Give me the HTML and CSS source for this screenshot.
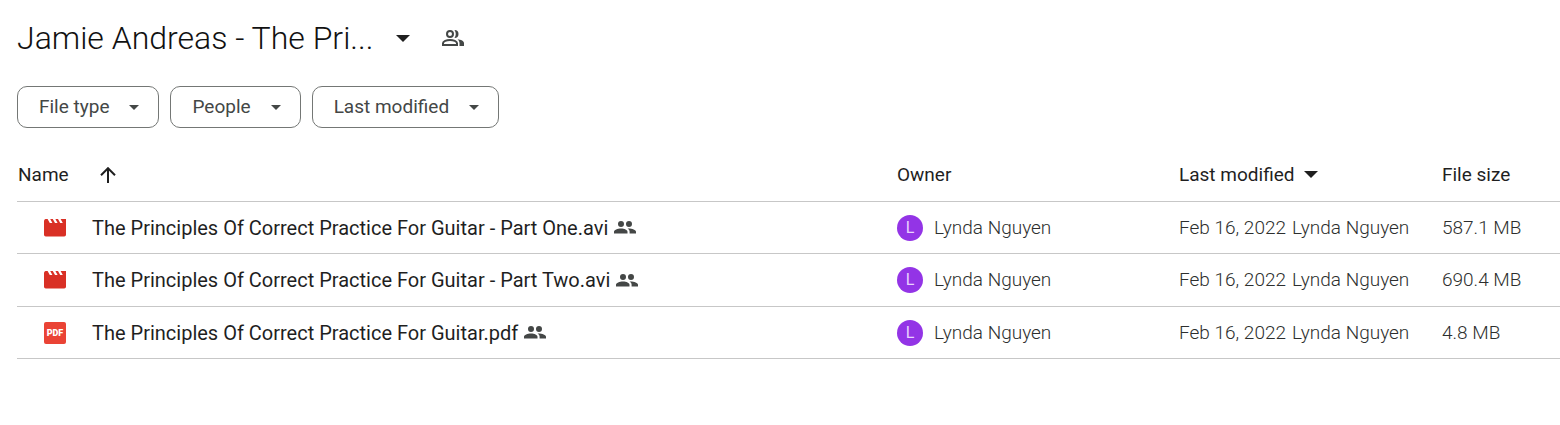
FILE: index.html
```
<!DOCTYPE html>
<html lang="en">
<head>
<meta charset="utf-8">
<title>Jamie Andreas - The Principles</title>
<link rel="stylesheet" href="styles.css">
</head>
<body>
<svg class="sprite" aria-hidden="true">
  <symbol id="caret" viewBox="0 0 14 7"><path d="M0 0h14L7 7z"/></symbol>
  <symbol id="shared" viewBox="0 0 22 13"><path d="M7 0a3 3 0 1 1 0 6A3 3 0 0 1 7 0zM15 0a3 3 0 1 1 0 6A3 3 0 0 1 15 0zM0 12.500v-1.800C0 8.800 3.500 7.400 7 7.400s6.500 1.400 6.500 3.300v1.800zM15.600 12.500v-1.800c0-1.400-.8-2.400-2-3.200 3.900-.3 8.400 1.300 8.400 3.200v1.800z"/></symbol>
  <symbol id="movie" viewBox="0 0 22 18"><path d="M0 2Q0 .4 1.500 0h2.100l2.200 4h2.600L6.200 0h2.600L11 4h2.600l-2.200-4H14l2.200 4h2.600l-2.200-4H22v15.800A1.800 1.800 0 0 1 20.200 17.600H1.800A1.800 1.800 0 0 1 0 15.800z"/></symbol>
</svg>
<header class="heading">
  <h1 class="title">Jamie Andreas - The Pri...</h1>
  <button class="icon-button" type="button" aria-label="Folder actions"><svg class="caret-large"><use href="#caret"/></svg></button>
  <button class="icon-button share" type="button" aria-label="Manage access">
    <svg class="people-outline" viewBox="0 0 22 16"><g fill="none" stroke="currentColor" stroke-width="2"><circle cx="8" cy="4" r="3"/><path d="M1 15v-1.800C1 11.300 4.500 10 8 10s7 1.300 7 3.200V15z"/></g><path fill="currentColor" d="M12.500 0a4 4 0 1 1 0 8c1.700-2.300 1.700-5.700 0-8zM17.500 16v-2.800c0-1.600-.8-2.900-2-3.900 3.500.5 6.500 1.700 6.500 3.900V16z"/></svg>
  </button>
</header>
<div class="filters">
  <button class="chip" type="button">File type<svg class="caret-small"><use href="#caret"/></svg></button>
  <button class="chip" type="button">People<svg class="caret-small"><use href="#caret"/></svg></button>
  <button class="chip" type="button">Last modified<svg class="caret-small"><use href="#caret"/></svg></button>
</div>
<main>
<table class="files">
  <colgroup><col><col class="col-owner"><col class="col-modified"><col class="col-size"></colgroup>
  <thead>
    <tr>
      <th scope="col"><span class="cell sort-name">Name<button class="icon-button" type="button" aria-label="Sort by name"><svg class="arrow" viewBox="0 0 16 16"><path d="M8 16V1.500M1 8.200l7-7 7 7" fill="none" stroke="currentColor" stroke-width="2"/></svg></button></span></th>
      <th scope="col">Owner</th>
      <th scope="col"><span class="cell sort-date">Last modified<button class="icon-button" type="button" aria-label="Change date column"><svg class="caret-large"><use href="#caret"/></svg></button></span></th>
      <th scope="col">File size</th>
    </tr>
  </thead>
  <tbody>
    <tr>
      <td><span class="cell file"><svg class="movie"><use href="#movie"/></svg><span class="name">The Principles Of Correct Practice For Guitar - Part One.avi</span><svg class="shared"><use href="#shared"/></svg></span></td>
      <td><span class="cell owner"><span class="avatar">L</span>Lynda Nguyen</span></td>
      <td><span class="cell date"><span>Feb 16, 2022</span><span>Lynda Nguyen</span></span></td>
      <td>587.1 MB</td>
    </tr>
    <tr>
      <td><span class="cell file"><svg class="movie"><use href="#movie"/></svg><span class="name">The Principles Of Correct Practice For Guitar - Part Two.avi</span><svg class="shared"><use href="#shared"/></svg></span></td>
      <td><span class="cell owner"><span class="avatar">L</span>Lynda Nguyen</span></td>
      <td><span class="cell date"><span>Feb 16, 2022</span><span>Lynda Nguyen</span></span></td>
      <td>690.4 MB</td>
    </tr>
    <tr>
      <td><span class="cell file"><span class="pdf">PDF</span><span class="name">The Principles Of Correct Practice For Guitar.pdf</span><svg class="shared"><use href="#shared"/></svg></span></td>
      <td><span class="cell owner"><span class="avatar">L</span>Lynda Nguyen</span></td>
      <td><span class="cell date"><span>Feb 16, 2022</span><span>Lynda Nguyen</span></span></td>
      <td>4.8 MB</td>
    </tr>
  </tbody>
</table>
</main>
</body>
</html>
```
FILE: styles.css
```
* { box-sizing: border-box; }
body { margin: 0; padding: 18px 0 0 17px; background: #fff; color: #1f1f1f; font: 400 19px/24px Roboto, sans-serif; }
svg { display: block; flex: none; fill: currentColor; }
.sprite { position: absolute; width: 0; height: 0; }
button { font: inherit; cursor: pointer; }
.icon-button { display: flex; padding: 0; border: 0; background: none; color: inherit; }
.heading { display: flex; align-items: center; }
.title { margin: 0 23px 0 0; color: #111; font-size: 32px; line-height: 40px; font-weight: 300; }
.share { margin-left: 32px; color: #444746; }
.people-outline { width: 22px; height: 16px; }
.caret-large { width: 14px; height: 7px; }
.caret-small { width: 10px; height: 5px; }
.filters { display: flex; gap: 11px; margin-top: 28px; }
.chip { display: flex; align-items: center; gap: 20px; height: 42px; padding: 0 19px 0 21px; border: 1px solid #747775; border-radius: 10px; background: #fff; color: #444746; }
.files { width: 100%; margin-top: 20px; table-layout: fixed; border-collapse: separate; border-spacing: 0; }
.col-owner { width: 282px; }
.col-modified { width: 263px; }
.col-size { width: 118px; }
th, td { height: 52px; padding: 0; border-bottom: 1px solid #c7c7c7; text-align: left; white-space: nowrap; }
tbody tr:nth-child(even) td { height: 53px; }
th { height: 54px; font-weight: 400; }
td { color: #2d2f2e; font-weight: 300; }
.cell { display: flex; align-items: center; }
.sort-name { gap: 31px; padding-left: 1px; }
.sort-date { gap: 10px; }
.arrow { width: 16px; height: 16px; }
.file { padding-left: 27px; }
.name { margin: 0 6px 0 26px; color: #1f1f1f; font-size: 20px; font-weight: 400; }
.movie { width: 22px; height: 18px; color: #d93025; }
.shared { width: 22px; height: 13px; color: #444746; }
.pdf { width: 22px; height: 22px; border-radius: 2px; background: #ea4335; color: #fff; font-size: 9px; line-height: 22px; font-weight: 900; text-align: center; }
.owner { gap: 11px; }
.avatar { width: 26px; height: 26px; border-radius: 50%; background: #9334e6; color: #e9d2fd; font-size: 16px; line-height: 26px; font-weight: 400; text-align: center; }
.date { gap: 6px; }
```
